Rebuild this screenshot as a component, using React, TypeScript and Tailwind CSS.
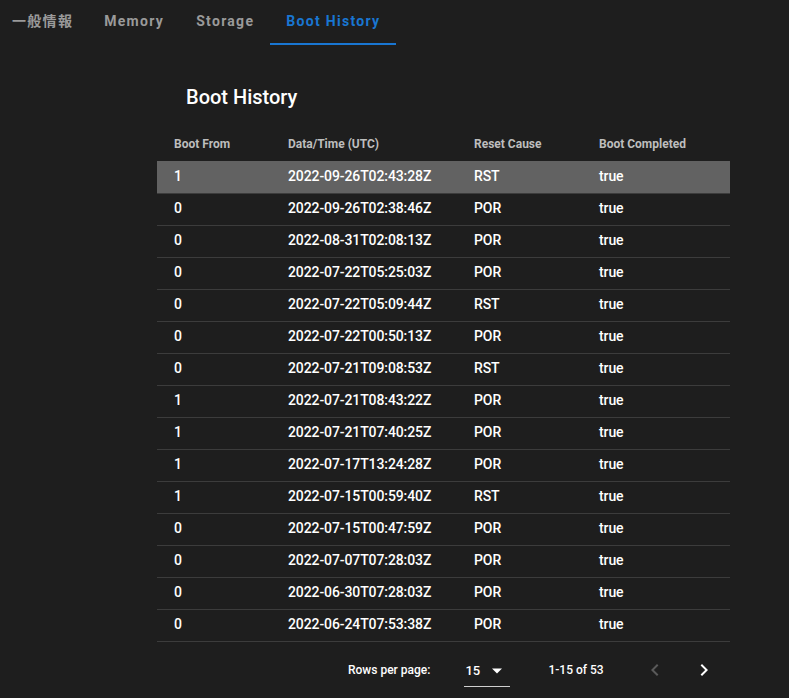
import React from 'react';

const rows: [string, string, string, string][] = [
    ['1', '2022-09-26T02:43:28Z', 'RST', 'true'],
    ['0', '2022-09-26T02:38:46Z', 'POR', 'true'],
    ['0', '2022-08-31T02:08:13Z', 'POR', 'true'],
    ['0', '2022-07-22T05:25:03Z', 'POR', 'true'],
    ['0', '2022-07-22T05:09:44Z', 'RST', 'true'],
    ['0', '2022-07-22T00:50:13Z', 'POR', 'true'],
    ['0', '2022-07-21T09:08:53Z', 'RST', 'true'],
    ['1', '2022-07-21T08:43:22Z', 'POR', 'true'],
    ['1', '2022-07-21T07:40:25Z', 'POR', 'true'],
    ['1', '2022-07-17T13:24:28Z', 'POR', 'true'],
    ['1', '2022-07-15T00:59:40Z', 'RST', 'true'],
    ['0', '2022-07-15T00:47:59Z', 'POR', 'true'],
    ['0', '2022-07-07T07:28:03Z', 'POR', 'true'],
    ['0', '2022-06-30T07:28:03Z', 'POR', 'true'],
    ['0', '2022-06-24T07:53:38Z', 'POR', 'true'],
];

const tabs = ['一般情報', 'Memory', 'Storage', 'Boot History'];

const App: React.FC = () => {
    return (
        <div
            className="min-h-[698px] bg-[#1e1e1e] text-white"
            style={{ fontFamily: 'Roboto, "Noto Sans CJK JP", sans-serif' }}
        >
            {/* Tabs */}
            <div className="flex h-[45px] -ml-[3px]">
                {tabs.map((t, i) => (
                    <div
                        key={t}
                        className={`min-w-[90px] flex items-center text-[14px] font-bold tracking-[1.3px] border-b-2 ${
                            i === 0 ? 'pl-[15px] pr-[15px] justify-start' : 'px-4 justify-center'
                        } ${i === 3 ? 'text-[#1976d2] border-[#1976d2]' : 'text-[#9a9a9a] border-transparent'}`}
                    >
                        {t}
                    </div>
                ))}
            </div>

            {/* Content */}
            <div className="ml-[157px] w-[573px]">
                <h2 className="pl-[29px] pt-[39px] h-[81px] text-[20px] font-medium leading-[26px]">Boot History</h2>

                <table className="w-full border-collapse">
                    <thead>
                        <tr className="h-[35px] text-[12px] font-bold text-[#bdbdbd]">
                            <th className="text-left font-bold pl-[17px] w-[114px]">Boot From</th>
                            <th className="text-left font-bold pl-[17px] w-[186px]">Data/Time (UTC)</th>
                            <th className="text-left font-bold pl-[17px] w-[125px]">Reset Cause</th>
                            <th className="text-left font-bold pl-[17px]">Boot Completed</th>
                        </tr>
                    </thead>
                    <tbody>
                        {rows.map((r, i) => (
                            <tr
                                key={i}
                                className={`h-[32px] text-[14px] font-medium tracking-[-0.1px] border-b border-[#3c3c3c] ${
                                    i === 0 ? 'bg-[#626262]' : ''
                                }`}
                            >
                                <td className="pl-[17px] pb-[1px]">{r[0]}</td>
                                <td className="pl-[17px] pb-[1px]">{r[1]}</td>
                                <td className="pl-[17px] pb-[1px]">{r[2]}</td>
                                <td className="pl-[17px] pb-[1px]">{r[3]}</td>
                            </tr>
                        ))}
                    </tbody>
                </table>

                {/* Pagination */}
                <div className="flex items-center h-[57px] text-[12px] font-medium">
                    <span className="ml-[191px]">Rows per page:</span>
                    <div className="ml-[34px] w-[46px] h-[32px] flex items-center border-b border-[#d0d0d0] mt-[2px] relative">
                        <span className="text-[13px] ml-[1px]">15</span>
                        <svg className="absolute right-[7px]" width="12" height="12" viewBox="0 0 12 12">
                            <path d="M1 3.5 L11 3.5 L6 8.5 Z" fill="#ffffff" />
                        </svg>
                    </div>
                    <span className="ml-[38px] text-[12px]">1-15 of 53</span>
                    <svg className="ml-[39px]" width="24" height="24" viewBox="0 0 24 24">
                        <path d="M15.41 7.41 14 6l-6 6 6 6 1.41-1.41L10.83 12z" fill="#5a5a5a" />
                    </svg>
                    <svg className="ml-[25px]" width="24" height="24" viewBox="0 0 24 24">
                        <path d="M10 6 8.59 7.41 13.17 12l-4.58 4.59L10 18l6-6z" fill="#ffffff" />
                    </svg>
                </div>
            </div>
        </div>
    );
};

export default App;
